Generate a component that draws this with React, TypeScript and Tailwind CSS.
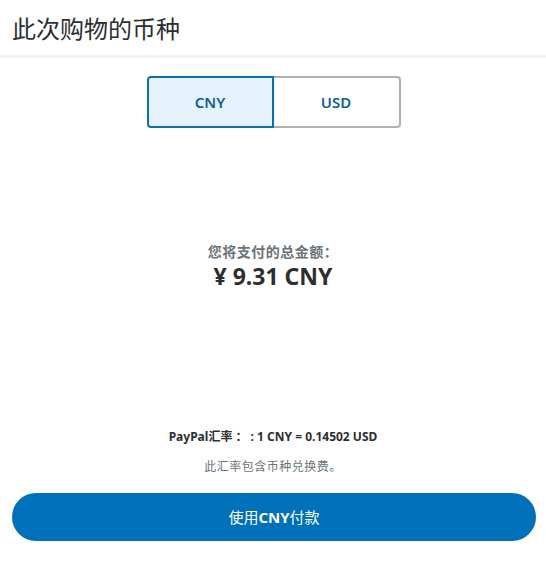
import React from "react";

export default function App() {
  const font = { fontFamily: '"Noto Sans", "Noto Sans CJK SC", sans-serif' };
  const cjk = { fontFamily: '"Noto Sans CJK SC", sans-serif' };
  return (
    <div className="w-[546px] h-[573px] bg-white flex flex-col" style={font}>
      <div className="h-[58px] flex items-center px-[12px] border-b-[3px] border-[#f2f2f2]">
        <h1 className="text-[24px] text-[#2c2e2f] leading-none font-normal" style={cjk}>此次购物的币种</h1>
      </div>
      <div className="flex justify-center pt-[18px]">
        <div className="flex w-[254px] h-[52px] ml-[1px]">
          <button className="w-[127px] h-full bg-[#e5f1fb] border-2 border-[#0f6fae] rounded-l-[4px] text-[15px] font-semibold text-[#0f5f9a]">CNY</button>
          <button className="w-[127px] h-full bg-white border-2 border-l-0 border-[#b0b0b0] rounded-r-[4px] text-[15px] font-semibold text-[#0f5f9a]">USD</button>
        </div>
      </div>
      <div className="flex flex-col items-center mt-[113px]">
        <div className="text-[14px] font-bold text-[#6c7378] leading-[20px] tracking-[0.5px]" style={cjk}>您将支付的总金额：</div>
        <div className="text-[23px] font-bold text-[#2c2e2f] leading-[30px]">¥ 9.31 CNY</div>
      </div>
      <div className="flex flex-col items-center mt-[137px]">
        <div className="text-[12px] font-bold text-[#2c2e2f] leading-[18px]">PayPal汇率 ： : 1 CNY = 0.14502 USD</div>
        <div className="text-[12px] text-[#6c7378] leading-[18px] mt-[11px] tracking-[0.5px]" style={cjk}>此汇率包含币种兑换费。</div>
      </div>
      <div className="pl-[12px] mt-[18px]">
        <button className="w-[524px] h-[48px] rounded-full bg-[#0070ba] text-white text-[15px]">
          使用<span className="font-bold">CNY</span>付款
        </button>
      </div>
    </div>
  );
}
